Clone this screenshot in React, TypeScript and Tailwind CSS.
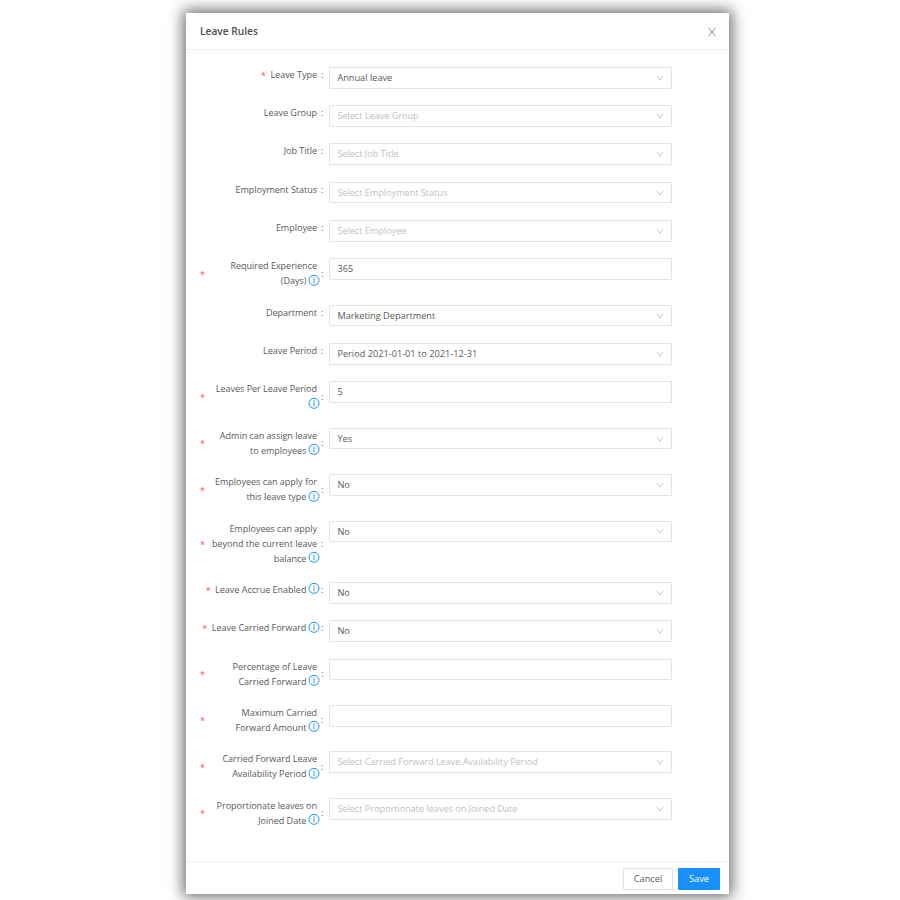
import React from 'react'

interface rule {
  lines: string[]
  required?: boolean
  info?: boolean
  kind: 'select' | 'input'
  value?: string
  placeholder?: string
}

const rules: rule[] = [
  { lines: ['Leave Type'], required: true, kind: 'select', value: 'Annual leave' },
  { lines: ['Leave Group'], kind: 'select', placeholder: 'Select Leave Group' },
  { lines: ['Job Title'], kind: 'select', placeholder: 'Select Job Title' },
  { lines: ['Employment Status'], kind: 'select', placeholder: 'Select Employment Status' },
  { lines: ['Employee'], kind: 'select', placeholder: 'Select Employee' },
  { lines: ['Required Experience', '(Days)'], required: true, info: true, kind: 'input', value: '365' },
  { lines: ['Department'], kind: 'select', value: 'Marketing Department' },
  { lines: ['Leave Period'], kind: 'select', value: 'Period 2021-01-01 to 2021-12-31' },
  { lines: ['Leaves Per Leave Period', ''], required: true, info: true, kind: 'input', value: '5' },
  { lines: ['Admin can assign leave', 'to employees'], required: true, info: true, kind: 'select', value: 'Yes' },
  { lines: ['Employees can apply for', 'this leave type'], required: true, info: true, kind: 'select', value: 'No' },
  { lines: ['Employees can apply', 'beyond the current leave', 'balance'], required: true, info: true, kind: 'select', value: 'No' },
  { lines: ['Leave Accrue Enabled'], required: true, info: true, kind: 'select', value: 'No' },
  { lines: ['Leave Carried Forward'], required: true, info: true, kind: 'select', value: 'No' },
  { lines: ['Percentage of Leave', 'Carried Forward'], required: true, info: true, kind: 'input' },
  { lines: ['Maximum Carried', 'Forward Amount'], required: true, info: true, kind: 'input' },
  { lines: ['Carried Forward Leave', 'Availability Period'], required: true, info: true, kind: 'select', placeholder: 'Select Carried Forward Leave Availability Period' },
  { lines: ['Proportionate leaves on', 'Joined Date'], required: true, info: true, kind: 'select', placeholder: 'Select Proportionate leaves on Joined Date' },
]

const InfoIcon = () => (
  <svg viewBox="0 0 12 12" className="-mr-[3.4px] ml-[2px] inline-block size-3 shrink-0 -translate-y-[0.7px]" fill="none" stroke="#1890ff">
    <circle cx="6" cy="6" r="5" strokeWidth="1" />
    <path d="M6 3v1M6 4.4V9" strokeWidth="0.9" />
  </svg>
)

const DownIcon = () => (
  <svg viewBox="0 0 8 8" className="size-2 shrink-0" fill="none" stroke="#c4c4c4" strokeWidth="0.9">
    <path d="M0.8 1.8L4 6.2L7.2 1.8" />
  </svg>
)

const FormRow = ({ rule }: { rule: rule }) => {
  const last = rule.lines.length - 1

  return (
    <div className="mb-[16.45px] flex items-start">
      <div className="flex w-[143px] items-center justify-end pl-[13px] text-[9.05px] leading-[15px]">
        {rule.required && (
          <span className={last > 0 ? 'mr-auto h-[15px] w-[5px] pl-[1px] pt-px text-[#ff4d4f]' : 'mr-[4.5px] h-[15px] pt-px text-[#ff4d4f]'}>*</span>
        )}
        <div className="text-right tracking-[-0.03px] whitespace-nowrap">
          {rule.lines.map((line, i) => (
            <div key={i} className="flex h-[15px] items-center justify-end">
              <span>{line}</span>
              {rule.info && i === last && <InfoIcon />}
            </div>
          ))}
        </div>
        <span className="ml-[4px] w-[8px] shrink-0">:</span>
      </div>
      <div className="flex h-[21.85px] w-[343px] items-center justify-between rounded-[1px] border border-[#e4e4e4] px-[7.4px]">
        <span className={rule.value ? 'text-[#595959]' : 'tracking-[-0.05px] text-[#bfbfbf]'}>{rule.value || rule.placeholder}</span>
        {rule.kind === 'select' && <DownIcon />}
      </div>
    </div>
  )
}

const App = () => {
  return (
    <div className="flex h-[900px] w-[900px] overflow-hidden bg-white pl-[186px] pt-[13px] font-['Open_Sans',sans-serif] text-[9.2px] text-[#595959]">
      <div className="flex h-[881px] w-[543.4px] flex-col bg-white shadow-[0_0_14px_3px_rgba(0,0,0,0.58)]">
        <div className="flex h-[37px] shrink-0 items-center justify-between border-b border-[#f0f0f0] pl-[14px] pr-[12.5px] pt-[2px]">
          <h1 className="text-[10.2px] font-semibold text-[#4d4d4d]">Leave Rules</h1>
          <button type="button" aria-label="Close">
            <svg viewBox="0 0 10 10" className="size-[10px]" fill="none" stroke="#8c8c8c" strokeWidth="1">
              <path d="M1.5 1L8.5 9M8.5 1L1.5 9" />
            </svg>
          </button>
        </div>
        <div className="flex-1 pt-[16.8px]">
          {rules.map((rule, i) => (
            <FormRow key={i} rule={rule} />
          ))}
        </div>
        <div className="flex h-[33px] shrink-0 items-center justify-end gap-[5px] border-t border-[#f0f0f0] pr-[9.4px] pt-[2px]">
          <button type="button" className="h-[22px] w-[50px] rounded-[1px] border border-[#e2e2e2]">Cancel</button>
          <button type="button" className="h-[22px] w-[42px] rounded-[1px] bg-[#1890ff] text-white">Save</button>
        </div>
      </div>
    </div>
  )
}

export default App
